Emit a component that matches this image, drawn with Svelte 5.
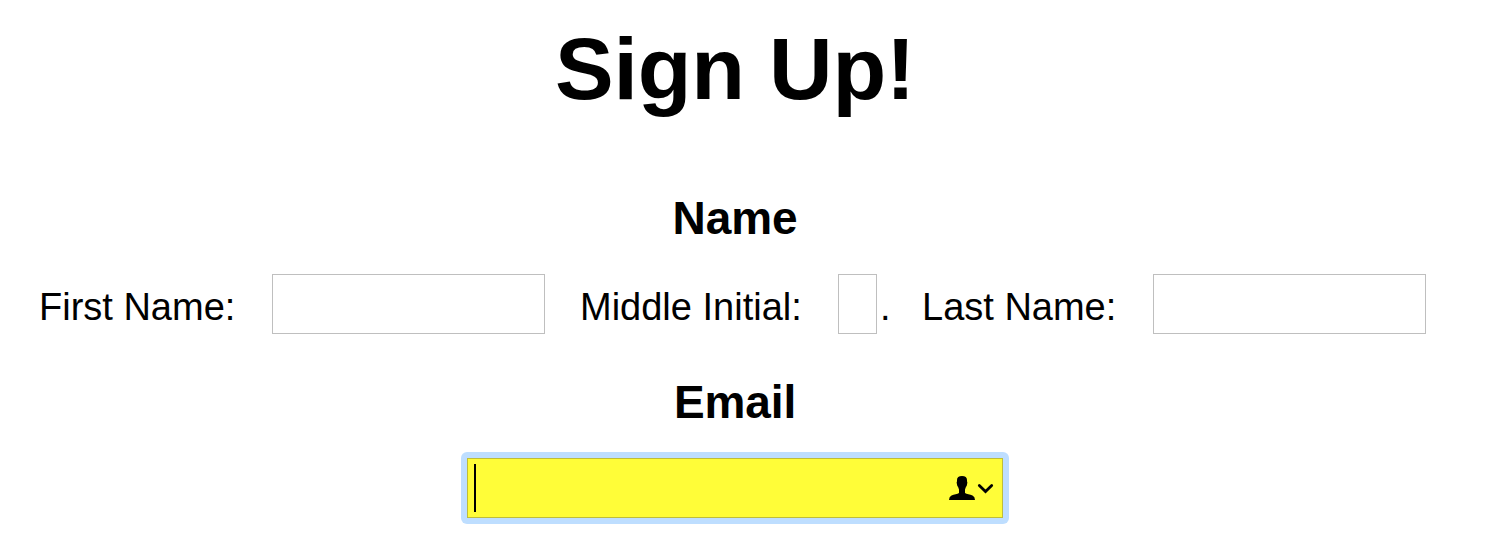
<script>
  let first = $state('');
  let middle = $state('');
  let last = $state('');
</script>

<main>
  <h1>Sign Up!</h1>
  <h2>Name</h2>
  <div class="names">
    <label class="a" for="first">First Name:</label>
    <input id="first" class="wide" bind:value={first} />
    <label class="b" for="middle">Middle Initial:</label>
    <input id="middle" class="short" bind:value={middle} />
    <span class="dot">.</span>
    <label class="c" for="last">Last Name:</label>
    <input id="last" class="wide" bind:value={last} />
  </div>
  <h2 class="mail">Email</h2>
  <div class="ring">
    <div class="email">
      <span class="caret"></span>
      <svg width="46" height="26" viewBox="0 0 46 26" aria-hidden="true">
        <path d="M14 0C10.700 0 9 1.500 9 4V5.500Q8.500 5.800 8.700 7L9.200 9.500Q9.400 10.500 10 10.800L11 13.500V17C9.500 18 6 18.300 3.500 19.500Q1 20.900 1 24H27Q27 20.900 24.500 19.500C22 18.300 18.500 18 17 17V13.500L18 10.800Q18.600 10.500 18.800 9.500L19.300 7Q19.500 5.800 19 5.500V4C19 1.500 17.300 0 14 0Z" />
        <path class="chev" d="M31.300 9.500L37.500 15.500L43.700 9.500" />
      </svg>
    </div>
  </div>
</main>

<style>
  :global(body) { margin: 0; background: #fff; }
  main {
    box-sizing: border-box;
    width: 1498px;
    height: 558px;
    overflow: hidden;
    color: #000;
    font-family: "Liberation Sans", Arial, sans-serif;
  }
  h1, h2 { margin: 0; width: 1469px; text-align: center; font-weight: 700; }
  h1 { padding-top: 18px; font-size: 88px; line-height: 102px; letter-spacing: -0.200px; text-indent: 1px; }
  h2 { margin-top: 72px; font-size: 46px; line-height: 52px; text-indent: 1px; letter-spacing: -0.100px; }
  .names {
    display: flex;
    height: 60px;
    margin-top: 30px;
    padding-left: 39px;
    font-size: 38px;
    line-height: 67px;
    white-space: nowrap;
  }
  .a { width: 233px; }
  .b { width: 258px; margin-left: 35px; }
  .dot { width: 42px; margin-left: 3px; }
  .c { width: 231px; }
  input {
    box-sizing: border-box;
    height: 60px;
    margin: 0;
    padding: 4px;
    border: 1px solid #bfbfbf;
    border-radius: 0;
    outline: none;
    font: inherit;
    background: #fff;
  }
  .wide { width: 273px; }
  .short { width: 39px; }
  .mail { margin-top: 42px; }
  .ring {
    box-sizing: border-box;
    width: 548px;
    margin: 24px 0 0 461px;
    padding: 6px;
    border-radius: 6px;
    background: #bedeff;
  }
  .email {
    display: flex;
    align-items: center;
    box-sizing: border-box;
    height: 60px;
    padding: 0 8px 0 6px;
    border: 1px solid #bfbd3a;
    background: #fffd38;
  }
  .caret { width: 2px; height: 48px; background: #000; }
  svg { display: block; margin: 2px 0 0 auto; }
  .chev { fill: none; stroke: #000; stroke-width: 2.800; stroke-linecap: round; }
</style>
